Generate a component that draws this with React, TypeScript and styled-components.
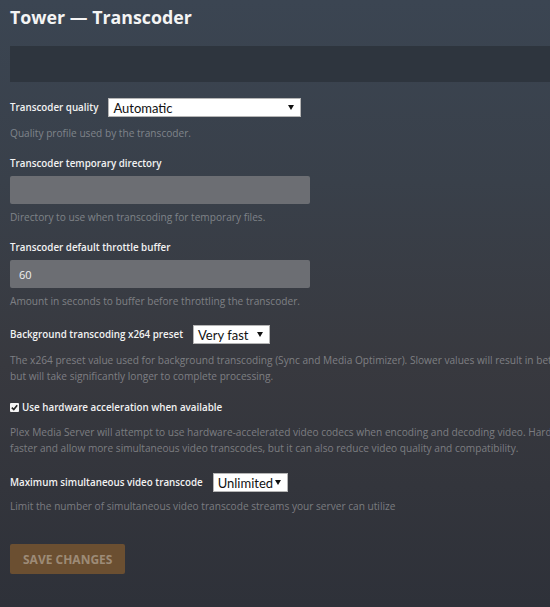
import styled, { createGlobalStyle } from 'styled-components';

const GlobalStyle = createGlobalStyle`
  html, body {
    margin: 0;
    padding: 0;
    height: 607px;
    overflow: hidden;
  }
  body {
    background: linear-gradient(180deg, #3b4552 0%, #39404a 30%, #38393f 60%, #2e3139 100%);
    font-family: 'Open Sans', 'Liberation Sans', sans-serif;
  }
`;

const Page = styled.div`
  width: 900px;
  padding: 5px 0 0 10px;
  box-sizing: border-box;
`;

const Title = styled.h1`
  margin: 0;
  font-size: 17.8px;
  line-height: 24px;
  font-weight: 700;
  color: #f4f4f4;
`;

const Band = styled.div`
  margin-top: 17px;
  height: 36px;
  background: #2e353e;
`;

const Field = styled.div<{ $top: number }>`
  margin-top: ${(p) => p.$top}px;
`;

const InlineRow = styled.div`
  display: flex;
  align-items: center;
  gap: 10px;
  height: 19px;
`;

const Label = styled.div`
  font-size: 9.8px;
  line-height: 16px;
  font-weight: 600;
  color: #f2f2f2;
  white-space: nowrap;
`;

const Help = styled.div<{ $mt: number }>`
  margin-top: ${(p) => p.$mt}px;
  font-size: 10.15px;
  line-height: 16px;
  color: rgba(255, 255, 255, 0.36);
  white-space: nowrap;
`;

const SelectBox = styled.div<{ $w: number }>`
  width: ${(p) => p.$w}px;
  height: 19px;
  box-sizing: border-box;
  background: #fff;
  border: 1px solid #b5b5b5;
  display: flex;
  align-items: center;
  justify-content: space-between;
  padding: 0 6px 0 4px;
  font-family: Lato, 'Liberation Sans', sans-serif;
  font-size: 13px;
  color: #111;
`;

const Arrow = styled.svg`
  width: 6px;
  height: 5px;
  flex-shrink: 0;
`;

const TextInput = styled.div`
  margin-top: 4px;
  width: 300px;
  height: 28px;
  border-radius: 2px;
  background: #6c6e73;
  padding-left: 9px;
  box-sizing: border-box;
  display: flex;
  align-items: center;
  font-size: 11px;
  color: #f0f0f0;
`;

const CheckRow = styled.div`
  display: flex;
  align-items: center;
  gap: 3px;
  height: 16px;
  font-size: 9.8px;
  font-weight: 600;
  color: #f2f2f2;
`;

const CheckBox = styled.span`
  width: 9px;
  height: 9px;
  background: #f4f4f4;
  border-radius: 1px;
  display: flex;
  align-items: center;
  justify-content: center;
`;

const SaveButton = styled.button`
  margin-top: 30px;
  height: 30px;
  padding: 0 13px;
  border: none;
  border-radius: 2px;
  background: #6b4f31;
  color: rgba(255, 255, 255, 0.35);
  font-family: 'Open Sans', 'Liberation Sans', sans-serif;
  font-size: 12px;
  font-weight: 700;
  text-transform: uppercase;
`;

const Select = ({ value, width }: { value: string; width: number }) => (
  <SelectBox $w={width}>
    <span>{value}</span>
    <Arrow viewBox="0 0 6 5">
      <path d="M0 0 H6 L3 5 Z" fill="#111" />
    </Arrow>
  </SelectBox>
);

export default function App() {
  return (
    <Page>
      <GlobalStyle />
      <Title>Tower — Transcoder</Title>
      <Band />

      <Field $top={16}>
        <InlineRow>
          <Label>Transcoder quality</Label>
          <Select value="Automatic" width={193} />
        </InlineRow>
        <Help $mt={8}>Quality profile used by the transcoder.</Help>
      </Field>

      <Field $top={15}>
        <Label>Transcoder temporary directory</Label>
        <TextInput />
        <Help $mt={5}>Directory to use when transcoding for temporary files.</Help>
      </Field>

      <Field $top={15}>
        <Label>Transcoder default throttle buffer</Label>
        <TextInput>60</TextInput>
        <Help $mt={5}>Amount in seconds to buffer before throttling the transcoder.</Help>
      </Field>

      <Field $top={16}>
        <InlineRow>
          <Label>Background transcoding x264 preset</Label>
          <Select value="Very fast" width={77} />
        </InlineRow>
        <Help $mt={8}>
          The x264 preset value used for background transcoding (Sync and Media Optimizer). Slower values will result in better video quality and smaller file sizes,
          <br />
          but will take significantly longer to complete processing.
        </Help>
      </Field>

      <Field $top={15}>
        <CheckRow>
          <CheckBox>
            <svg width="7" height="7" viewBox="0 0 7 7">
              <path d="M0.8 3.6 L2.8 5.6 L6.2 1.2" stroke="#222" strokeWidth="1.6" fill="none" />
            </svg>
          </CheckBox>
          <span>Use hardware acceleration when available</span>
        </CheckRow>
        <Help $mt={9}>
          Plex Media Server will attempt to use hardware-accelerated video codecs when encoding and decoding video. Hardware acceleration can make transcoding
          <br />
          faster and allow more simultaneous video transcodes, but it can also reduce video quality and compatibility.
        </Help>
      </Field>

      <Field $top={17}>
        <InlineRow>
          <Label>Maximum simultaneous video transcode</Label>
          <Select value="Unlimited" width={75} />
        </InlineRow>
        <Help $mt={6}>Limit the number of simultaneous video transcode streams your server can utilize</Help>
      </Field>

      <SaveButton>Save Changes</SaveButton>
    </Page>
  );
}
